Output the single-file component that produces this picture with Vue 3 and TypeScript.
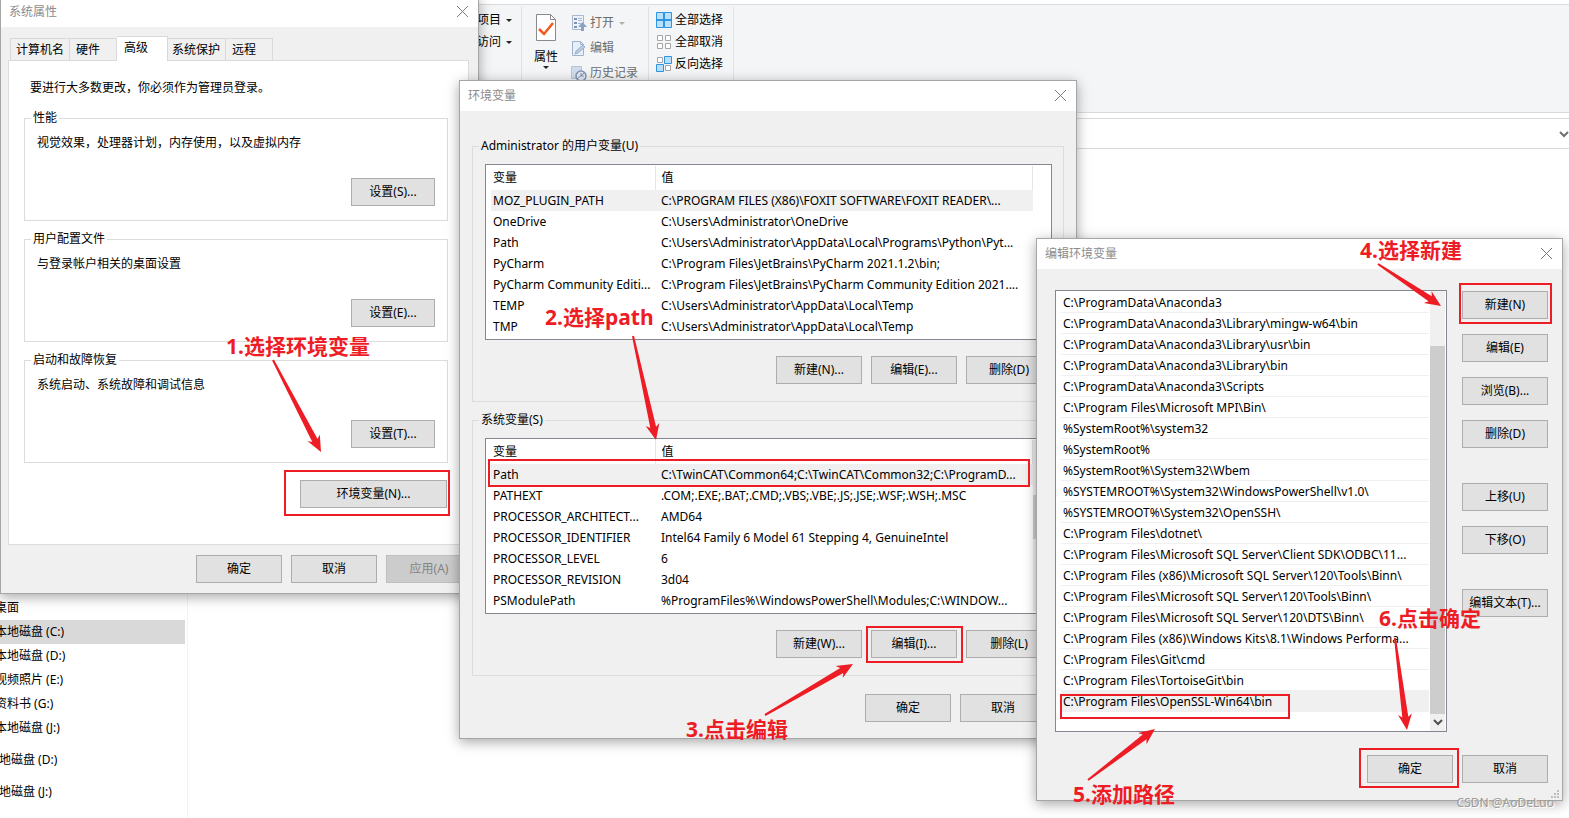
<script setup lang="ts">
interface Variable {
  name: string
  value: string
}

interface Mark {
  id: string
  text: string
}

const tabs = ['计算机名', '硬件', '高级', '系统保护', '远程']
const activeTab = '高级'

const groups = [
  { title: '性能', text: '视觉效果，处理器计划，内存使用，以及虚拟内存', action: '设置(S)...' },
  { title: '用户配置文件', text: '与登录帐户相关的桌面设置', action: '设置(E)...' },
  { title: '启动和故障恢复', text: '系统启动、系统故障和调试信息', action: '设置(T)...' },
]

const userVariables: Variable[] = [
  { name: 'MOZ_PLUGIN_PATH', value: 'C:\\PROGRAM FILES (X86)\\FOXIT SOFTWARE\\FOXIT READER\\...' },
  { name: 'OneDrive', value: 'C:\\Users\\Administrator\\OneDrive' },
  { name: 'Path', value: 'C:\\Users\\Administrator\\AppData\\Local\\Programs\\Python\\Pyt...' },
  { name: 'PyCharm', value: 'C:\\Program Files\\JetBrains\\PyCharm 2021.1.2\\bin;' },
  { name: 'PyCharm Community Editi...', value: 'C:\\Program Files\\JetBrains\\PyCharm Community Edition 2021....' },
  { name: 'TEMP', value: 'C:\\Users\\Administrator\\AppData\\Local\\Temp' },
  { name: 'TMP', value: 'C:\\Users\\Administrator\\AppData\\Local\\Temp' },
]

const systemVariables: Variable[] = [
  { name: 'Path', value: 'C:\\TwinCAT\\Common64;C:\\TwinCAT\\Common32;C:\\ProgramD...' },
  { name: 'PATHEXT', value: '.COM;.EXE;.BAT;.CMD;.VBS;.VBE;.JS;.JSE;.WSF;.WSH;.MSC' },
  { name: 'PROCESSOR_ARCHITECT...', value: 'AMD64' },
  { name: 'PROCESSOR_IDENTIFIER', value: 'Intel64 Family 6 Model 61 Stepping 4, GenuineIntel' },
  { name: 'PROCESSOR_LEVEL', value: '6' },
  { name: 'PROCESSOR_REVISION', value: '3d04' },
  { name: 'PSModulePath', value: '%ProgramFiles%\\WindowsPowerShell\\Modules;C:\\WINDOW...' },
]

const variableGroups = [
  { title: 'Administrator 的用户变量(U)', rows: userVariables, actions: ['新建(N)...', '编辑(E)...', '删除(D)'], scroll: false },
  { title: '系统变量(S)', rows: systemVariables, actions: ['新建(W)...', '编辑(I)...', '删除(L)'], scroll: true },
]

const paths = [
  'C:\\ProgramData\\Anaconda3',
  'C:\\ProgramData\\Anaconda3\\Library\\mingw-w64\\bin',
  'C:\\ProgramData\\Anaconda3\\Library\\usr\\bin',
  'C:\\ProgramData\\Anaconda3\\Library\\bin',
  'C:\\ProgramData\\Anaconda3\\Scripts',
  'C:\\Program Files\\Microsoft MPI\\Bin\\',
  '%SystemRoot%\\system32',
  '%SystemRoot%',
  '%SystemRoot%\\System32\\Wbem',
  '%SYSTEMROOT%\\System32\\WindowsPowerShell\\v1.0\\',
  '%SYSTEMROOT%\\System32\\OpenSSH\\',
  'C:\\Program Files\\dotnet\\',
  'C:\\Program Files\\Microsoft SQL Server\\Client SDK\\ODBC\\11...',
  'C:\\Program Files (x86)\\Microsoft SQL Server\\120\\Tools\\Binn\\',
  'C:\\Program Files\\Microsoft SQL Server\\120\\Tools\\Binn\\',
  'C:\\Program Files\\Microsoft SQL Server\\120\\DTS\\Binn\\',
  'C:\\Program Files (x86)\\Windows Kits\\8.1\\Windows Performa...',
  'C:\\Program Files\\Git\\cmd',
  'C:\\Program Files\\TortoiseGit\\bin',
  'C:\\Program Files\\OpenSSL-Win64\\bin',
]

const editActions = [
  { label: '新建(N)', apart: false },
  { label: '编辑(E)', apart: false },
  { label: '浏览(B)...', apart: false },
  { label: '删除(D)', apart: false },
  { label: '上移(U)', apart: true },
  { label: '下移(O)', apart: false },
  { label: '编辑文本(T)...', apart: true },
]

const drives = ['桌面', '本地磁盘 (C:)', '本地磁盘 (D:)', '视频照片 (E:)', '资料书 (G:)', '本地磁盘 (J:)']
const roots = ['本地磁盘 (D:)', '本地磁盘 (J:)']

const marks: Mark[] = [
  { id: 'm1', text: '1.选择环境变量' },
  { id: 'm2', text: '2.选择path' },
  { id: 'm3', text: '3.点击编辑' },
  { id: 'm4', text: '4.选择新建' },
  { id: 'm5', text: '5.添加路径' },
  { id: 'm6', text: '6.点击确定' },
]

const boxes = ['b1', 'b2', 'b3', 'b4', 'b5', 'b6']

// Tapered arrow: thin at the tail, widening up to a notched head.
function arrow(x1: number, y1: number, x2: number, y2: number): string {
  const length = Math.hypot(x2 - x1, y2 - y1)
  const ux = (x2 - x1) / length
  const uy = (y2 - y1) / length
  const at = (along: number, side: number) =>
    `${(x1 + ux * along - uy * side).toFixed(1)},${(y1 + uy * along + ux * side).toFixed(1)}`
  return [
    at(0, -1), at(length - 13, -3), at(length - 16, -7), at(length, 0),
    at(length - 16, 7), at(length - 13, 3), at(0, 1),
  ].join(' ')
}

const arrows = [
  arrow(273, 360, 321, 452),
  arrow(633, 336, 656, 440),
  arrow(765, 715, 853, 664),
  arrow(1378, 264, 1441, 306),
  arrow(1088, 780, 1155, 729),
  arrow(1395, 638, 1407, 730),
]
</script>

<template>
  <main class="desktop">
    <header class="ribbon">
      <section class="cell first">
        <button type="button" class="tool">项目<i class="caret"></i></button>
        <button type="button" class="tool">访问<i class="caret"></i></button>
      </section>
      <section class="cell open">
        <button type="button" class="big">
          <svg width="22" height="29" viewBox="0 0 22 29">
            <path d="M1.500 1.500h14l5 5v21h-19z" fill="#fff" stroke="#8a8a8a" />
            <path d="M15.500 1.500v5h5" fill="none" stroke="#8a8a8a" />
            <path d="M4 16l5 5 9-11" fill="none" stroke="#f25a1d" stroke-width="2.500" />
          </svg>
          <span>属性</span>
          <i class="caret"></i>
        </button>
        <div class="stack">
          <button type="button" class="tool dim">
            <svg width="16" height="17" viewBox="0 0 16 17">
              <path d="M1.500 .5h11v14h-11z" fill="#eef3fa" stroke="#a9b8cc" />
              <path d="M3 3h3v2H3zM3 7h3v2H3zM3 11h3v2H3z" fill="#7d93b5" />
              <path d="M7 3.500h4M7 5.500h4M7 8.500h3" stroke="#a9b8cc" />
              <path d="M10 16v-4H7l4.500-5L16 12h-3v4z" fill="#8ba2c4" />
            </svg>
            打开<i class="caret"></i>
          </button>
          <button type="button" class="tool dim">
            <svg width="16" height="17" viewBox="0 0 16 17">
              <path d="M1.500 1.500h8l3 3v11h-11z" fill="#e6f0fb" stroke="#9fb2cb" />
              <path d="M9.500 1.500v3h3" fill="none" stroke="#9fb2cb" />
              <path d="M4 14l1-3 7-6 2 2-7 6z" fill="#b9cbe2" stroke="#9db0cc" />
            </svg>
            编辑
          </button>
          <button type="button" class="tool dim">
            <svg width="16" height="17" viewBox="0 0 16 17">
              <path d="M.5 1.500h10v12H.5z" fill="#cfdcec" stroke="#b5c6da" />
              <circle cx="10" cy="11" r="5" fill="#e4e9f1" stroke="#8194b2" stroke-width="1.500" />
              <path d="M10 8v3h3M6 14l7-6" fill="none" stroke="#8194b2" />
            </svg>
            历史记录
          </button>
        </div>
      </section>
      <section class="cell select">
        <button type="button" class="tool">
          <svg width="16" height="16" viewBox="0 0 16 16">
            <path d="M.5.5h15v15H.5z" fill="#b9e0fb" stroke="#2f95e0" />
            <path d="M8 0v16M0 8h16" stroke="#2f95e0" stroke-width="2" />
          </svg>
          全部选择
        </button>
        <button type="button" class="tool">
          <svg width="16" height="16" viewBox="0 0 16 16">
            <path d="M1.500 1.500h5v5h-5zM9.500 1.500h5v5h-5zM1.500 9.500h5v5h-5zM9.500 9.500h5v5h-5z" fill="#fff" stroke="#a6a6a6" />
          </svg>
          全部取消
        </button>
        <button type="button" class="tool">
          <svg width="16" height="16" viewBox="0 0 16 16">
            <path d="M1.500 1.500h5v5h-5zM9.500 9.500h5v5h-5z" fill="#fff" stroke="#a6a6a6" />
            <path d="M8.500.5h7v7h-7zM.5 8.500h7v7h-7z" fill="#b9e0fb" stroke="#2f95e0" />
          </svg>
          反向选择
        </button>
      </section>
    </header>

    <div class="address">
      <button type="button" class="drop" aria-label="展开">
        <svg width="10" height="8" viewBox="0 0 10 8"><path d="M1 2l4 4 4-4" fill="none" stroke="#707070" stroke-width="2" /></svg>
      </button>
    </div>

    <nav class="tree">
      <ul class="near">
        <li v-for="(drive, i) in drives" :key="drive" :class="{ current: i === 1 }"><a href="#">{{ drive }}</a></li>
      </ul>
      <ul class="far">
        <li v-for="root in roots" :key="root"><a href="#">{{ root }}</a></li>
      </ul>
    </nav>

    <section class="window system">
      <header class="title">
        <h2>系统属性</h2>
        <button type="button" class="close" aria-label="关闭">
          <svg width="11" height="11" viewBox="0 0 11 11"><path d="M0 0l11 11M11 0L0 11" stroke="#7b7b7b" /></svg>
        </button>
      </header>
      <div class="tabs" role="tablist">
        <button v-for="tab in tabs" :key="tab" type="button" role="tab" class="tab" :class="{ active: tab === activeTab }">{{ tab }}</button>
      </div>
      <div class="pane">
        <p class="note">要进行大多数更改，你必须作为管理员登录。</p>
        <fieldset v-for="group in groups" :key="group.title" class="group">
          <legend>{{ group.title }}</legend>
          <p>{{ group.text }}</p>
          <button type="button" class="btn">{{ group.action }}</button>
        </fieldset>
        <button type="button" class="btn env">环境变量(N)...</button>
      </div>
      <footer class="actions">
        <button type="button" class="btn">确定</button>
        <button type="button" class="btn">取消</button>
        <button type="button" class="btn" disabled>应用(A)</button>
      </footer>
    </section>

    <section class="window variables">
      <header class="title">
        <h2>环境变量</h2>
        <button type="button" class="close" aria-label="关闭">
          <svg width="11" height="11" viewBox="0 0 11 11"><path d="M0 0l11 11M11 0L0 11" stroke="#7b7b7b" /></svg>
        </button>
      </header>
      <div class="content">
        <fieldset v-for="group in variableGroups" :key="group.title" class="group">
          <legend>{{ group.title }}</legend>
          <div class="list">
            <table>
              <thead>
                <tr><th class="name">变量</th><th>值</th></tr>
              </thead>
              <tbody>
                <tr v-for="(row, i) in group.rows" :key="row.name" :class="{ chosen: i === 0 }">
                  <td>{{ row.name }}</td>
                  <td>{{ row.value }}</td>
                </tr>
              </tbody>
            </table>
            <div class="gutter" :class="{ track: group.scroll }"><i v-if="group.scroll" class="thumb"></i></div>
          </div>
          <div class="actions">
            <button v-for="action in group.actions" :key="action" type="button" class="btn">{{ action }}</button>
          </div>
        </fieldset>
        <footer class="actions">
          <button type="button" class="btn">确定</button>
          <button type="button" class="btn">取消</button>
        </footer>
      </div>
    </section>

    <section class="window edit">
      <header class="title">
        <h2>编辑环境变量</h2>
        <button type="button" class="close" aria-label="关闭">
          <svg width="11" height="11" viewBox="0 0 11 11"><path d="M0 0l11 11M11 0L0 11" stroke="#7b7b7b" /></svg>
        </button>
      </header>
      <div class="columns">
        <div class="list">
          <ul>
            <li v-for="(path, i) in paths" :key="path" :class="{ chosen: i === paths.length - 1 }">{{ path }}</li>
          </ul>
          <div class="scroll">
            <i class="thumb"></i>
            <svg width="15" height="17" viewBox="0 0 15 17"><path d="M4 6l4 4 4-4" fill="none" stroke="#505050" stroke-width="2" /></svg>
          </div>
        </div>
        <div class="side">
          <button v-for="action in editActions" :key="action.label" type="button" class="btn" :class="{ apart: action.apart }">{{ action.label }}</button>
        </div>
      </div>
      <footer class="actions">
        <button type="button" class="btn">确定</button>
        <button type="button" class="btn">取消</button>
      </footer>
      <svg class="grip" width="9" height="9" viewBox="0 0 9 9">
        <path d="M6 0h2v2H6zM3 3h2v2H3zM6 3h2v2H6zM0 6h2v2H0zM3 6h2v2H3zM6 6h2v2H6z" fill="#bdbdbd" />
      </svg>
    </section>

    <div class="overlay">
      <svg class="arrows" width="1569" height="818" viewBox="0 0 1569 818">
        <polygon v-for="points in arrows" :key="points" :points="points" fill="#ee1c25" />
      </svg>
      <span v-for="box in boxes" :key="box" class="box" :class="box"></span>
      <strong v-for="mark in marks" :key="mark.id" class="mark" :class="mark.id">{{ mark.text }}</strong>
      <span class="watermark">CSDN @AoDeLuo</span>
    </div>
  </main>
</template>

<style>
body {
  margin: 0;
  background: #fff;
}
</style>

<style scoped>
.desktop {
  position: relative;
  min-height: 100vh;
  overflow: hidden;
  background: #fff;
  color: #000;
  font: 12px/18px "Noto Sans", "Noto Sans CJK SC", sans-serif;
}

.desktop * {
  box-sizing: border-box;
}

button {
  font: inherit;
  color: inherit;
  margin: 0;
  padding: 0;
  border: 0;
  background: none;
  white-space: nowrap;
}

h2, p, ul {
  margin: 0;
  padding: 0;
  list-style: none;
}

svg {
  display: block;
  flex: none;
}

/* Explorer behind the dialogs */
.ribbon {
  display: flex;
  height: 109px;
  margin-top: 4px;
  padding-left: 477px;
  border-top: 1px solid #dadbdc;
  border-bottom: 1px solid #dadbdc;
  background: #f4f5f7;
}

.cell {
  display: flex;
  margin: 2px 0 3px;
  border-right: 1px solid #dfe1e4;
}

.first, .select {
  flex-direction: column;
}

.first {
  width: 45px;
  padding-top: 4px;
  gap: 4px;
}

.open {
  width: 127px;
  padding-left: 12px;
  gap: 13px;
}

.select {
  width: 85px;
  padding: 4px 0 0 7px;
  gap: 4px;
}

.tool {
  display: flex;
  align-items: center;
  height: 18px;
  gap: 3px;
}

.tool .caret {
  margin-left: 2px;
}

.dim {
  color: #6d6d6d;
}

.dim .caret {
  border-top-color: #b0b0b0;
}

.caret {
  border: 3px solid transparent;
  border-top-color: #222;
  border-bottom: 0;
}

.big {
  display: flex;
  flex-direction: column;
  align-items: center;
  align-self: flex-start;
  padding-top: 6px;
}

.big span {
  margin-top: 6px;
}

.stack {
  display: flex;
  flex-direction: column;
  padding-top: 7px;
  gap: 7px;
}

.address {
  display: flex;
  align-items: center;
  justify-content: flex-end;
  height: 31px;
  margin-top: 5px;
  border: solid #d9d9d9;
  border-width: 1px 0;
}

.tree {
  width: 188px;
  height: 669px;
  padding-top: 447px;
  border-right: 1px solid #f2f2f2;
}

.tree a {
  color: #000;
  text-decoration: none;
}

.near li {
  height: 24px;
  width: 185px;
  line-height: 24px;
  text-indent: -5px;
}

.near .current {
  background: #d9d9d9;
}

.far {
  padding-top: 4px;
}

.far li {
  line-height: 32px;
  text-indent: -13px;
}

/* Dialog windows */
.window {
  position: absolute;
  border: 1px solid #a6a6a6;
  background: #f0f0f0;
  box-shadow: 0 3px 12px rgba(0, 0, 0, 0.35);
}

.title {
  display: flex;
  align-items: center;
  justify-content: space-between;
  height: 30px;
  padding: 0 10px 0 8px;
  background: #fff;
}

.title h2 {
  color: #8c8c8c;
  font-size: 12px;
  font-weight: 400;
}

.close {
  padding-bottom: 2px;
}

.btn {
  width: 86px;
  height: 28px;
  border: 1px solid #adadad;
  background: #e1e1e1;
  text-align: center;
}

.btn:disabled {
  border-color: #bfbfbf;
  background: #cccccc;
  color: #838383;
}

.actions {
  display: flex;
  justify-content: flex-end;
  gap: 9px;
}

.group {
  min-width: 0;
  margin: 0 0 10px;
  border: 1px solid #dcdcdc;
}

.group legend {
  margin-left: -6px;
  padding: 0 2px;
  line-height: 16px;
}

.chosen {
  background: #f0f0f0;
}

.system {
  top: -4px;
  left: 0;
  width: 479px;
}

.tabs {
  display: flex;
  align-items: flex-end;
  margin: 9px 0 -1px 9px;
  height: 25px;
  position: relative;
}

.tab {
  width: 47px;
  height: 23px;
  padding-left: 6px;
  border: 1px solid #d9d9d9;
  border-left-width: 0;
  text-align: left;
}

.tab:first-child {
  width: 60px;
  border-left-width: 1px;
  padding-left: 5px;
}

.tab:nth-child(4) {
  width: 58px;
  padding-left: 4px;
}

.tab.active {
  width: 51px;
  height: 25px;
  padding: 0 0 3px 7px;
  border-bottom: 0;
  background: #fff;
}

.pane {
  display: flex;
  flex-direction: column;
  margin: 0 9px 0 7px;
  padding: 18px 20px 36px 15px;
  border: 1px solid #dcdcdc;
  background: #fff;
}

.note {
  padding: 0 0 13px 6px;
}

.pane .group {
  display: block;
  padding: 8px 12px 14px;
}

.pane .group .btn {
  display: block;
  width: 84px;
  margin: 26px 0 0 auto;
}

.pane .env {
  width: 147px;
  margin: 7px 1px 0 auto;
}

.system > .actions {
  padding: 10px 6px;
}

.variables {
  top: 80px;
  left: 459px;
  width: 618px;
}

.content {
  padding: 27px 12px 16px 12px;
}

.content .group {
  padding: 10px 11px 17px 12px;
}

.content .list {
  display: flex;
  padding: 1px 0 2px 5px;
  border: 1px solid #828790;
  background: #fff;
}

.content .group .actions {
  margin-top: 16px;
}

table {
  flex: 1;
  table-layout: fixed;
  border-collapse: collapse;
}

th, td {
  height: 21px;
  padding: 0 0 0 2px;
  font-weight: 400;
  text-align: left;
  white-space: nowrap;
}

th {
  height: 24px;
  border-right: 1px solid #e5e5e5;
}

th:last-child, td:last-child {
  padding-left: 6px;
}

.name {
  width: 164px;
}

.gutter {
  width: 18px;
}

.track {
  background: #f0f0f0;
}

.gutter .thumb {
  display: block;
  height: 44px;
  margin-top: 55px;
  background: #cdcdcd;
}

.content > .actions {
  padding: 8px 18px 0 0;
}

.edit {
  top: 238px;
  left: 1036px;
  width: 527px;
}

.columns {
  display: flex;
  align-items: flex-start;
  padding: 21px 14px 0 18px;
  gap: 15px;
}

.columns .list {
  display: flex;
  flex: 1;
  border: 1px solid #828790;
  background: #fff;
}

.columns ul {
  flex: 1;
  padding: 1px 1px 19px 1px;
}

.columns li {
  height: 21px;
  padding-left: 2px;
  margin-left: 4px;
  border-bottom: 1px solid #f0f0f0;
  line-height: 22px;
  white-space: nowrap;
}

.scroll {
  display: flex;
  flex-direction: column;
  width: 15px;
  margin-right: 1px;
  padding-top: 55px;
  background: #f0f0f0;
}

.scroll .thumb {
  flex: 1;
  background: #cdcdcd;
}

.side {
  display: flex;
  flex-direction: column;
  padding-top: 1px;
  gap: 15px;
}

.apart {
  margin-top: 20px;
}

.edit > .actions {
  padding: 23px 14px 17px;
}

.grip {
  position: absolute;
  right: 2px;
  bottom: 1px;
}

/* Tutorial marks drawn over the windows */
.overlay {
  position: absolute;
  inset: 0;
  pointer-events: none;
}

.arrows, .box, .mark, .watermark {
  position: absolute;
}

.arrows {
  top: 0;
  left: 0;
}

.box {
  border: 2px solid #ee1c25;
}

.b1 { left: 284px; top: 470px; width: 166px; height: 46px; }
.b2 { left: 488px; top: 459px; width: 542px; height: 28px; }
.b3 { left: 866px; top: 626px; width: 97px; height: 37px; }
.b4 { left: 1459px; top: 283px; width: 93px; height: 41px; }
.b5 { left: 1060px; top: 694px; width: 230px; height: 25px; }
.b6 { left: 1359px; top: 748px; width: 100px; height: 40px; }

.mark {
  color: #ee1c25;
  font-size: 21px;
  font-weight: 700;
  line-height: 28px;
  white-space: nowrap;
}

.m1 { left: 226px; top: 332px; }
.m2 { left: 545px; top: 303px; }
.m3 { left: 686px; top: 715px; }
.m4 { left: 1360px; top: 236px; }
.m5 { left: 1073px; top: 780px; }
.m6 { left: 1379px; top: 604px; }

.watermark {
  right: 15px;
  top: 794px;
  color: #9b9b9b;
  font-size: 12px;
  text-shadow: 1px 1px 0 #fff;
}
</style>
